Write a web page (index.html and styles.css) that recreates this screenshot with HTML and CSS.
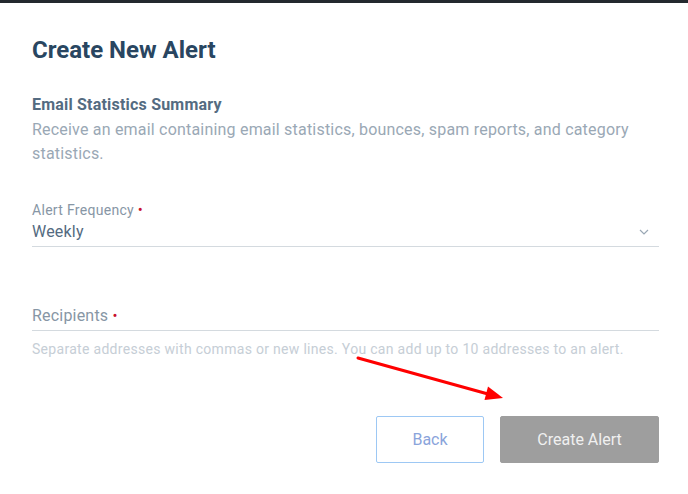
FILE: index.html
```html
<!DOCTYPE html>
<html lang="en">
<head>
<meta charset="UTF-8">
<meta name="viewport" content="width=device-width, initial-scale=1.0">
<title>Create New Alert</title>
<link rel="stylesheet" href="styles.css">
</head>
<body>
<div class="topbar"></div>

<div class="page">
    <h1 class="title">Create New Alert</h1>

    <h2 class="section-title">Email Statistics Summary</h2>
    <p class="section-desc">Receive an email containing email statistics, bounces, spam reports, and category statistics.</p>

    <div class="field field-select">
        <label class="field-label">Alert Frequency <span class="req">&bull;</span></label>
        <div class="select-row">
            <span class="select-value">Weekly</span>
            <svg class="chevron" width="10" height="6" viewBox="0 0 10 6"><path d="M1 1l4 4 4-4" fill="none" stroke="#9aa8b5" stroke-width="1.2"/></svg>
        </div>
    </div>

    <div class="field field-text">
        <label class="field-label big">Recipients <span class="req">&bull;</span></label>
    </div>
    <p class="help">Separate addresses with commas or new lines. You can add up to 10 addresses to an alert.</p>

    <div class="actions">
        <button class="btn btn-back">Back</button>
        <button class="btn btn-create">Create Alert</button>
    </div>
</div>

<svg class="arrow" width="160" height="60" viewBox="0 0 160 60">
    <line x1="8" y1="8" x2="138" y2="44" stroke="#ff0000" stroke-width="3" stroke-linecap="round"/>
    <polygon points="153,48 138,36.5 134.5,50" fill="#ff0000"/>
</svg>
</body>
</html>
```

FILE: styles.css
```css
body {
    margin: 0;
    padding: 0;
    background-color: #ffffff;
    font-family: Roboto, "Liberation Sans", sans-serif;
    color: #294661;
}
.topbar {
    height: 3px;
    background-color: #23292e;
}
.page {
    padding: 0 29px 0 32px;
}
.title {
    margin: 32px 0 0;
    font-size: 24px;
    line-height: 30px;
    font-weight: 700;
    color: #294661;
}
.section-title {
    margin: 30px 0 0;
    font-size: 16px;
    line-height: 20px;
    font-weight: 700;
    letter-spacing: 0.2px;
    color: #546b81;
}
.section-desc {
    margin: 3px 0 0;
    font-size: 16px;
    line-height: 24px;
    letter-spacing: 0.2px;
    color: #9aa8b5;
}
.field {
    border-bottom: 1px solid #d4dadf;
}
.field-select {
    margin-top: 34px;
    padding-bottom: 3px;
}
.field-label {
    display: block;
    font-size: 14px;
    line-height: 20px;
    letter-spacing: 0.3px;
    color: #8796a5;
}
.field-label.big {
    font-size: 16px;
    line-height: 22px;
    letter-spacing: 0.2px;
}
.req {
    color: #c8102e;
    font-size: 15px;
}
.select-row {
    display: flex;
    justify-content: space-between;
    align-items: center;
    padding-right: 10px;
}
.select-value {
    font-size: 16px;
    line-height: 23px;
    letter-spacing: 0.2px;
    color: #546b81;
}
.field-text {
    margin-top: 58px;
    padding-bottom: 3px;
}
.help {
    margin: 9px 0 0;
    font-size: 14px;
    line-height: 18px;
    letter-spacing: 0.3px;
    color: #c6ced6;
}
.actions {
    display: flex;
    justify-content: flex-end;
    gap: 16px;
    margin-top: 58px;
}
.btn {
    height: 47px;
    font-family: Roboto, "Liberation Sans", sans-serif;
    font-size: 16px;
    border-radius: 2px;
    cursor: pointer;
}
.btn-back {
    width: 108px;
    background-color: #ffffff;
    border: 1px solid #9dc8f4;
    color: #8aa4db;
}
.btn-create {
    width: 159px;
    background-color: #9e9e9e;
    border: 1px solid #9e9e9e;
    color: #f0f0f0;
}
.arrow {
    position: absolute;
    left: 350px;
    top: 350px;
}
```
